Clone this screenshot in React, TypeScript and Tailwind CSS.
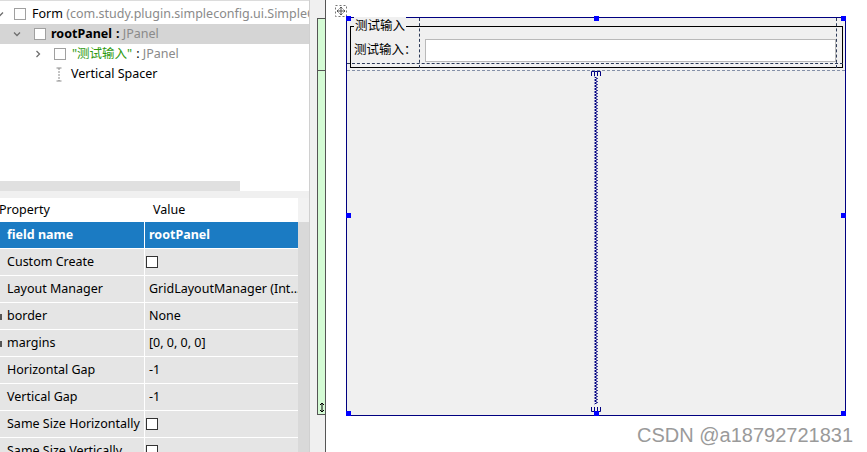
import React from "react";

const font = { fontFamily: '"Noto Sans", "Noto Sans CJK SC", sans-serif' };

function Box({ className = "" }: { className?: string }) {
    return <span className={"inline-block w-[12px] h-[12px] border border-[#a0a0a0] bg-white shrink-0 " + className} />;
}

function Chevron({ down }: { down?: boolean }) {
    return (
        <svg width="8" height="8" viewBox="0 0 8 8" className="shrink-0">
            {down
                ? <path d="M1 2.5 L4 5.5 L7 2.5" fill="none" stroke="#6e6e6e" strokeWidth="1.3" />
                : <path d="M2.5 1 L5.5 4 L2.5 7" fill="none" stroke="#6e6e6e" strokeWidth="1.3" />}
        </svg>
    );
}

function Tree() {
    return (
        <div className="h-[181px] shrink-0 bg-white border-t border-[#dcdcdc] pt-[3px] overflow-hidden text-[12.5px] text-black whitespace-nowrap">
            <div className="h-[20px] flex items-center">
                <span className="w-[14px] shrink-0 -ml-[4px] flex"><Chevron down /></span>
                <Box className="ml-[4px]" />
                <span className="ml-[6px] shrink-0">Form <span className="text-[#8a8a8a]">(com.study.plugin.simpleconfig.ui.SimpleConfigForm)</span></span>
            </div>
            <div className="h-[20px] flex items-center bg-[#d5d5d5]">
                <span className="ml-[13px] flex shrink-0"><Chevron down /></span>
                <Box className="ml-[13px]" />
                <span className="ml-[5px] font-bold">rootPanel</span>
                <span className="ml-[4px] text-[#8a8a8a]"><span className="text-black font-bold">:</span> JPanel</span>
            </div>
            <div className="h-[20px] flex items-center">
                <span className="ml-[34px] flex shrink-0"><Chevron /></span>
                <Box className="ml-[12px]" />
                <span className="ml-[6px] text-[#2e9a10]">"测试输入"</span>
                <span className="ml-[4px] text-[#8a8a8a]"><span className="text-black">:</span> JPanel</span>
            </div>
            <div className="h-[20px] flex items-center">
                <svg width="6" height="15" viewBox="0 0 6 15" className="ml-[56px] shrink-0">
                    <path d="M0.5 1 H5.5 M0.5 14 H5.5" stroke="#8a8a8a" />
                    <path d="M3 1 V14" stroke="#8a8a8a" strokeDasharray="2 1" />
                </svg>
                <span className="ml-[9px]">Vertical Spacer</span>
            </div>
        </div>
    );
}

type Row = { name: string; value?: string; check?: boolean; mark?: boolean };

const rows: Row[] = [
    { name: "Custom Create", check: true },
    { name: "Layout Manager", value: "GridLayoutManager (Int..." },
    { name: "border", value: "None", mark: true },
    { name: "margins", value: "[0, 0, 0, 0]", mark: true },
    { name: "Horizontal Gap", value: "-1" },
    { name: "Vertical Gap", value: "-1" },
    { name: "Same Size Horizontally", check: true },
    { name: "Same Size Vertically", check: true },
];

function Properties() {
    return (
        <div className="flex shrink-0 text-[12.5px] text-black whitespace-nowrap">
            <div className="w-[298px]">
                <div className="h-[24px] bg-white flex items-center">
                    <span className="w-[145px] -ml-[1px]">Property</span>
                    <span className="ml-[9px]">Value</span>
                </div>
                <div className="h-[27px] flex bg-[#1b7bc3] text-white font-bold border-b border-white">
                    <div className="w-[145px] border-r border-white pl-[7px] flex items-center">field name</div>
                    <div className="flex-1 pl-[4px] flex items-center">rootPanel</div>
                </div>
                {rows.map((r) => (
                    <div key={r.name} className="h-[27px] flex bg-[#e5e5e5] border-b border-white">
                        <div className="w-[145px] shrink-0 border-r border-white pl-[7px] flex items-center relative">
                            {r.mark && <span className="absolute left-0 top-[11px] w-[2px] h-[6px] bg-[#555]" />}
                            {r.name}
                        </div>
                        <div className="flex-1 flex items-center overflow-hidden">
                            {r.check
                                ? <span className="ml-[1px] inline-block w-[12px] h-[12px] border border-[#333] bg-white" />
                                : <span className="pl-[4px]">{r.value}</span>}
                        </div>
                    </div>
                ))}
            </div>
            <div className="w-[11px] flex flex-col">
                <div className="h-[24px] bg-[#f2f2f2]" />
                <div className="flex-1 bg-[#d9d9d9]" />
            </div>
        </div>
    );
}

function Handle({ className }: { className: string }) {
    return <span className={"absolute w-[5px] h-[5px] bg-[#0000ff] " + className} />;
}

function Spacer() {
    let d = "M4.5 7";
    for (let y = 7; y < 334; y += 3) d += ` L7.5 ${y + 1.5} L4.5 ${y + 3}`;
    return (
        <svg width="12" height="344" viewBox="0 0 12 344" className="absolute left-[243px] top-[52px]">
            <path d="M1.5 6 V1.5 H4.5 V6 M4.5 1.5 H7.5 V6 M7.5 1.5 H10.5 V6" fill="none" stroke="#000080" />
            <path d={d} fill="none" stroke="#000080" />
            <path d="M1.5 337 V341.5 H4.5 V337 M4.5 341.5 H7.5 V337 M7.5 341.5 H10.5 V337" fill="none" stroke="#000080" />
        </svg>
    );
}

function Canvas() {
    return (
        <div className="flex-1 bg-white relative pt-[17px] pl-[20px]">
            <svg width="12" height="12" viewBox="0 0 12 12" className="absolute left-[9px] top-[5px]">
                <rect x="0.5" y="0.5" width="11" height="11" fill="none" stroke="#777" strokeDasharray="2 2" />
                <path d="M6 2 V10 M2 6 H10 M4.5 3.5 L6 2 L7.5 3.5 M4.5 8.5 L6 10 L7.5 8.5 M3.5 4.5 L2 6 L3.5 7.5 M8.5 4.5 L10 6 L8.5 7.5" fill="none" stroke="#555" />
            </svg>
            <div className="relative w-[500px] h-[399px] border border-[#000080] bg-[#f0f0f0] pt-[8px] pl-[3px]">
                <div className="relative w-[493px] h-[42px] border border-black">
                    <span className="absolute -top-[10px] left-[3px] px-[1px] bg-[#f0f0f0] text-[12.5px] leading-[18px] text-black">测试输入</span>
                    <div className="flex items-center pl-[3px] pt-[12px]">
                        <span className="w-[71px] text-[12.5px] text-black">测试输入：</span>
                        <div className="w-[411px] h-[23px] bg-white border border-[#b9b9b9]" />
                    </div>
                </div>
                <div className="absolute left-[72px] top-0 h-[50px] border-l border-dashed border-[#2c3a58]" />
                <div className="absolute left-[489px] top-0 h-[50px] border-l border-dashed border-[#2c3a58]" />
                <div className="absolute left-0 top-[45px] w-[496px] border-t border-dashed border-[#2c3a58]" />
                <div className="absolute left-0 top-[52px] w-[498px] border-t border-dashed border-[#8490a8]" />
                <Spacer />
                <Handle className="-left-[1px] -top-[2px]" />
                <Handle className="left-[247px] -top-[2px]" />
                <Handle className="left-[494px] -top-[2px]" />
                <Handle className="-left-[1px] top-[195px]" />
                <Handle className="left-[494px] top-[195px]" />
                <Handle className="-left-[1px] top-[393px]" />
                <Handle className="left-[247px] top-[393px]" />
                <Handle className="left-[494px] top-[393px]" />
            </div>
        </div>
    );
}

export default function App() {
    return (
        <div className="w-[867px] h-[452px] flex overflow-hidden relative bg-white" style={font}>
            <div className="w-[309px] shrink-0 flex flex-col overflow-hidden">
                <Tree />
                <div className="h-[10px] shrink-0 bg-white"><div className="w-[240px] h-full bg-[#e0e0e0]" /></div>
                <div className="h-[7px] shrink-0 bg-[#f0f0f0]" />
                <Properties />
            </div>
            <div className="w-px shrink-0 bg-[#d0d0d0]" />
            <div className="w-[16px] shrink-0 bg-[#f0f0f0] border-r border-[#555] pt-[18px] pl-[7px]">
                <div className="w-[8px] h-[397px] border border-r-0 border-[#555] bg-[#d4fbd4] flex flex-col">
                    <div className="h-[52px] border-b border-[#555]" />
                    <div className="flex-1 flex items-end justify-center pb-[1px]">
                        <svg width="6" height="11" viewBox="0 0 6 11">
                            <path d="M3 1 V10 M1 3 L3 1 L5 3 M1 8 L3 10 L5 8" fill="none" stroke="#000" />
                        </svg>
                    </div>
                </div>
            </div>
            <Canvas />
            <span className="absolute left-[637px] top-[423px] text-[20px] leading-[24px] text-[#9a9a9a] [text-shadow:0_0_2px_#fff]" style={{ fontFamily: '"Liberation Sans", Arial, sans-serif' }}>
                CSDN @a18792721831
            </span>
        </div>
    );
}
